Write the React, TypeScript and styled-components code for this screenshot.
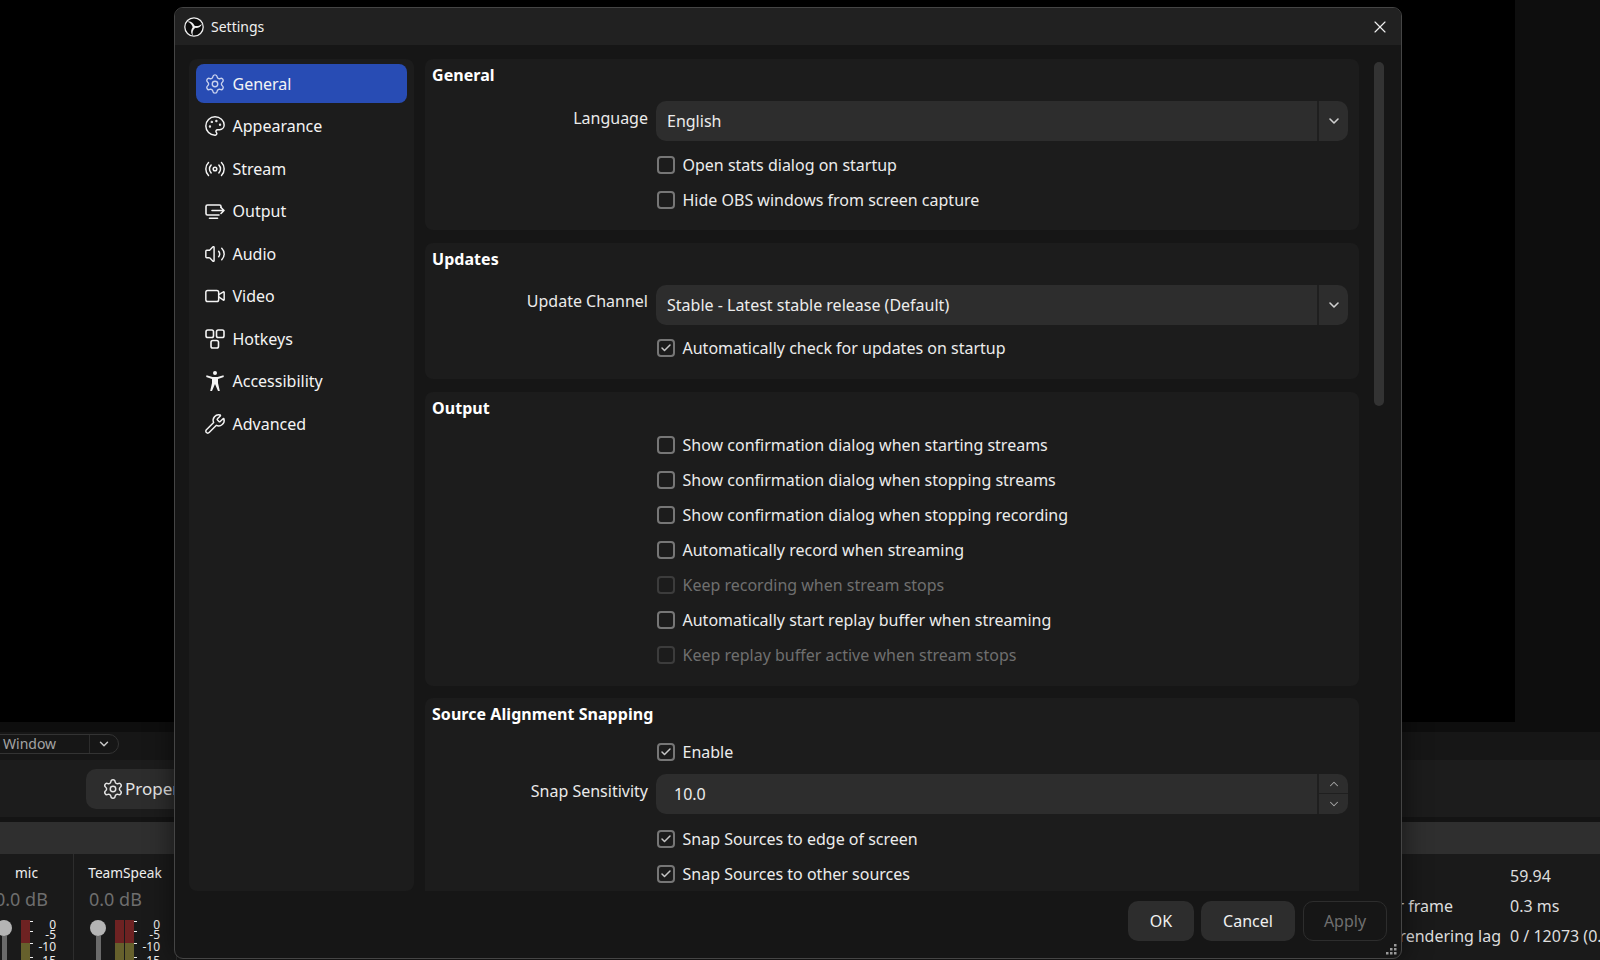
import React from 'react';
import styled, { createGlobalStyle } from 'styled-components';
import { Settings, Palette, Radio, Volume2, Video, Wrench, ChevronDown, ChevronUp, X, Check } from 'lucide-react';

const Global = createGlobalStyle`
  html, body { margin: 0; padding: 0; background: #000; }
  body { font-family: "Noto Sans", "Open Sans", sans-serif; color: #fff; }
  * { box-sizing: border-box; }
`;

const Page = styled.div`
  position: relative;
  width: 1600px;
  height: 960px;
  overflow: hidden;
  display: flex;
  flex-direction: column;
  background: #0e0e0e;
`;
const Preview = styled.div`
  height: 722px;
  width: 1515px;
  flex: none;
  margin-bottom: 10px;
  background: #000;
`;
const ContextBar = styled.div`
  height: 28px;
  flex: none;
  background: #161616;
  display: flex;
  align-items: flex-start;
  overflow: hidden;
`;
const SourceSelect = styled.div`
  margin: 2px 0 0 -60px;
  width: 179px;
  height: 20px;
  border: 1px solid #333;
  border-radius: 10px;
  display: flex;
  align-items: center;
  padding-left: 62px;
  font-size: 14px;
  line-height: 16px;
  color: #a4a4a4;
  flex: none;
`;
const SelectTail = styled.span`
  margin-left: auto;
  width: 29px;
  height: 100%;
  border-left: 1px solid #2c2c2c;
  display: flex;
  align-items: center;
  justify-content: center;
  color: #c8c8c8;
`;
const Toolbar = styled.div`
  height: 57px;
  flex: none;
  padding-left: 86px;
  background: #1c1c1c;
  display: flex;
  align-items: center;
`;
const ToolButton = styled.div`
  height: 40px;
  width: 150px;
  background: #2d2d2d;
  border-radius: 10px;
  display: flex;
  align-items: center;
  gap: 1px;
  padding-left: 16px;
  font-size: 17px;
  color: #e4e4e4;
`;
const DockGap = styled.div`
  height: 5px;
  flex: none;
  background: #141414;
`;
const DockHeader = styled.div`
  height: 32px;
  flex: none;
  background: #2f2f2f;
`;
const Dock = styled.div`
  flex: 1;
  min-height: 0;
  display: flex;
  justify-content: space-between;
  background: #1a1a1a;
  overflow: hidden;
`;
const Mixer = styled.div`
  display: flex;
  margin-left: -20px;
`;
const Channel = styled.div<{ $w: number }>`
  width: ${p => p.$w}px;
  flex: none;
  border-right: 1px solid #2d2d2d;
  padding: 9px 0 0 16px;
  display: flex;
  flex-direction: column;
  align-items: flex-start;
`;
const ChannelName = styled.div`
  flex: none;
  align-self: center;
  margin-left: -16px;
  height: 24px;
  line-height: 20px;
  font-size: 13.7px;
  color: #f0f0f0;
`;
const ChannelDb = styled.div`
  flex: none;
  height: 24px;
  line-height: 24px;
  margin-left: -1px;
  font-size: 18px;
  color: #6e6e6e;
  white-space: nowrap;
`;
const MeterRow = styled.div`
  flex: none;
  margin-top: 9px;
  display: flex;
  height: 60px;
`;
const Fader = styled.div`
  width: 16px;
  display: flex;
  flex-direction: column;
  align-items: center;
  margin-right: 9px;
`;
const Knob = styled.div`
  width: 16px;
  height: 16px;
  border-radius: 50%;
  background: #b4b4b4;
  flex: none;
`;
const Rail = styled.div`
  width: 5px;
  height: 44px;
  background: #6a6a6a;
`;
const Bars = styled.div`
  display: flex;
  gap: 1px;
`;
const Bar = styled.div`
  width: 9px;
  height: 60px;
  background: linear-gradient(#6e2222 0 23px, #66602c 23px);
`;
const Scale = styled.div`
  width: 26px;
  display: flex;
  flex-direction: column;
`;
const ScaleRow = styled.div<{ $h: number }>`
  height: ${p => p.$h}px;
  flex: none;
  display: flex;
  justify-content: space-between;
  font-size: 12px;
  line-height: 9px;
  color: #eee;
`;
const Tick = styled.i`
  width: 3px;
  height: 1px;
  margin-top: 1px;
  background: #eee;
`;
const Stats = styled.div`
  display: grid;
  grid-template-columns: 280px auto;
  grid-auto-rows: 30px;
  align-content: start;
  padding-top: 7px;
  margin-right: -28px;
  font-size: 16px;
  line-height: 30px;
  white-space: nowrap;
  color: #dedede;
  width: 398px;
`;

const Dialog = styled.div`
  position: absolute;
  left: 174px;
  top: 7px;
  width: 1228px;
  height: 952px;
  border: 1px solid #454545;
  border-radius: 9px;
  background: #161616;
  box-shadow: 0 0 28px rgba(0, 0, 0, 0.55);
  overflow: hidden;
  display: flex;
  flex-direction: column;
`;
const TitleBar = styled.div`
  height: 37px;
  flex: none;
  background: #212121;
  display: flex;
  align-items: center;
  padding: 0 11px 0 9px;
  gap: 7px;
  font-size: 14px;
  color: #f0f0f0;
`;
const CloseBtn = styled.div`
  margin-left: auto;
  display: flex;
  color: #eee;
`;
const Body = styled.div`
  flex: 1;
  min-height: 0;
  display: flex;
  padding: 14px 17px 0 14px;
`;
const Sidebar = styled.nav`
  width: 225px;
  flex: none;
  height: 832px;
  background: #1c1c1c;
  border-radius: 8px;
  padding: 5px 7px;
  display: flex;
  flex-direction: column;
  gap: 3.5px;
`;
const NavItem = styled.div<{ $active?: boolean }>`
  height: 39px;
  flex: none;
  border-radius: 8px;
  background: ${p => (p.$active ? '#284cb4' : 'transparent')};
  display: flex;
  align-items: center;
  padding-left: 8px;
  gap: 6.5px;
  font-size: 16px;
  color: #f4f4f4;
  svg { flex: none; }
`;
const Scroller = styled.div`
  margin-left: 11px;
  width: 934px;
  height: 832px;
  flex: none;
  overflow: hidden;
  display: flex;
  flex-direction: column;
  gap: 12.8px;
`;
const Panel = styled.section`
  background: #1c1c1c;
  border-radius: 8px;
  padding: 4px 11px 13px 7px;
  flex: none;
`;
const PanelTitle = styled.h2`
  margin: 0 0 8px;
  font-size: 16px;
  line-height: 24px;
  font-weight: 700;
  color: #fff;
  letter-spacing: 0.05px;
`;
const FormRow = styled.div`
  display: grid;
  grid-template-columns: 216px 1fr;
  column-gap: 8px;
  align-items: center;
  min-height: 35px;
`;
const FieldRow = styled(FormRow)<{ $top: number; $bottom: number }>`
  margin: ${p => p.$top}px 0 ${p => p.$bottom}px;
`;
const FieldLabel = styled.div`
  text-align: right;
  font-size: 16px;
  color: #eaeaea;
  margin-top: -7px;
`;
const Field = styled.div<{ $pad: number }>`
  height: 40px;
  background: #2d2d2d;
  border-radius: 10px;
  display: flex;
  align-items: center;
  font-size: 16px;
  color: #ececec;
  padding-left: ${p => p.$pad}px;
  overflow: hidden;
`;
const FieldTail = styled.div`
  margin-left: auto;
  width: 31px;
  height: 100%;
  border-left: 2px solid #1f1f1f;
  display: flex;
  align-items: center;
  justify-content: center;
  color: #d0d0d0;
`;
const SpinTail = styled.div`
  margin-left: auto;
  width: 31px;
  height: 100%;
  border-left: 2px solid #1f1f1f;
  display: grid;
  grid-template-rows: 1fr 1fr;
  color: #a8a8a8;
`;
const SpinCell = styled.div<{ $split?: boolean }>`
  display: flex;
  align-items: center;
  justify-content: center;
  border-bottom: ${p => (p.$split ? '1px solid #1f1f1f' : 'none')};
`;
const CheckLine = styled.div<{ $off?: boolean }>`
  display: flex;
  align-items: center;
  gap: 7.5px;
  font-size: 16px;
  color: ${p => (p.$off ? '#6f6f6f' : '#ececec')};
  padding-left: 1px;
`;
const Box = styled.span<{ $off?: boolean }>`
  width: 18px;
  height: 18px;
  flex: none;
  border: 2px solid ${p => (p.$off ? '#3c3c3c' : '#767676')};
  border-radius: 4px;
  display: flex;
  align-items: center;
  justify-content: center;
  color: #c6c6c6;
`;
const Scrollbar = styled.div`
  margin-left: 15px;
  margin-top: 3px;
  width: 10px;
  height: 344px;
  flex: none;
  border-radius: 5px;
  background: #333;
`;
const Footer = styled.div`
  height: 67px;
  flex: none;
  display: flex;
  justify-content: flex-end;
  gap: 7px;
  padding: 10px 14px 0 0;
  position: relative;
`;
const FootButton = styled.div<{ $w: number; $off?: boolean }>`
  width: ${p => p.$w}px;
  height: 40px;
  margin-left: ${p => (p.$off ? '1px' : '0')};
  border-radius: 10px;
  display: flex;
  align-items: center;
  justify-content: center;
  font-size: 16px;
  background: ${p => (p.$off ? 'transparent' : '#2d2d2d')};
  border: ${p => (p.$off ? '1px solid #2d2d2d' : 'none')};
  color: ${p => (p.$off ? '#6f6f6f' : '#f0f0f0')};
`;
const Grip = styled.svg`
  position: absolute;
  right: 4px;
  bottom: 3px;
`;

const ObsLogo = () => (
  <svg width="20" height="20" viewBox="0 0 20 20" fill="none">
    <circle cx="10" cy="10" r="9.2" fill="#0c0c0c" stroke="#f0f0f0" strokeWidth="1.3" />
    {[0, 120, 240].map(r => (
      <path
        key={r}
        transform={`rotate(${r} 10 10)`}
        d="M10.800 10.200C10.200 6.800 7.200 3.600 3.200 4.800C6.400 5.600 8.400 7.800 8.800 10.800Z"
        fill="#f0f0f0"
      />
    ))}
  </svg>
);
const OutputIcon = () => (
  <svg width="22" height="22" viewBox="0 0 22 22" fill="none" stroke="currentColor" strokeWidth="1.6" strokeLinecap="round" strokeLinejoin="round">
    <path d="M17 7.500V6.500a1.500 1.500 0 0 0-1.500-1.500H3.500A1.500 1.500 0 0 0 2 6.500v7A1.500 1.500 0 0 0 3.500 15H15" />
    <path d="M8 10.500h12M17 7.500l3 3-3 3" />
    <path d="M5.500 18.300h8" />
  </svg>
);
const HotkeysIcon = () => (
  <svg width="22" height="22" viewBox="0 0 22 22" fill="none" stroke="currentColor" strokeWidth="1.6">
    <rect x="2" y="2" width="7.500" height="7.500" rx="1.800" />
    <rect x="12.500" y="2" width="7.500" height="7.500" rx="1.800" />
    <rect x="7" y="12.500" width="7.500" height="7.500" rx="1.800" />
  </svg>
);
const AccessIcon = () => (
  <svg width="22" height="22" viewBox="0 0 22 22" fill="currentColor">
    <circle cx="11" cy="3" r="2" />
    <path d="M2.500 5.200 8.500 7H13.500L19.500 5.200 19.800 7 14 9V13L15.800 21H14L11 14 8 21H6.200L8 13V9L2.200 7Z" />
  </svg>
);

const nav = [
  { label: 'General', icon: <Settings size={22} strokeWidth={1.5} color="#c9d2ee" /> },
  { label: 'Appearance', icon: <Palette size={22} strokeWidth={1.6} /> },
  { label: 'Stream', icon: <Radio size={22} strokeWidth={1.6} /> },
  { label: 'Output', icon: <OutputIcon /> },
  { label: 'Audio', icon: <Volume2 size={22} strokeWidth={1.6} /> },
  { label: 'Video', icon: <Video size={22} strokeWidth={1.6} /> },
  { label: 'Hotkeys', icon: <HotkeysIcon /> },
  { label: 'Accessibility', icon: <AccessIcon /> },
  { label: 'Advanced', icon: <Wrench size={22} strokeWidth={1.6} /> },
];

const scale = [
  { t: '0', h: 10 },
  { t: '-5', h: 12 },
  { t: '-10', h: 14 },
  { t: '-15', h: 14 },
];

const CheckRow = ({ text, on, off }: { text: string; on?: boolean; off?: boolean }) => (
  <FormRow>
    <div />
    <CheckLine $off={off}>
      <Box $off={off}>{on && <Check size={12} strokeWidth={3} />}</Box>
      {text}
    </CheckLine>
  </FormRow>
);
const SelectRow = ({ label, value }: { label: string; value: string }) => (
  <FieldRow $top={14} $bottom={6}>
    <FieldLabel>{label}</FieldLabel>
    <Field $pad={11}>
      {value}
      <FieldTail><ChevronDown size={16} strokeWidth={2.4} /></FieldTail>
    </Field>
  </FieldRow>
);

const Meter = ({ name, bars, w }: { name: string; bars: number; w: number }) => (
  <Channel $w={w}>
    <ChannelName>{name}</ChannelName>
    <ChannelDb>0.0 dB</ChannelDb>
    <MeterRow>
      <Fader><Knob /><Rail /></Fader>
      <Bars>{Array.from({ length: bars }).map((_, i) => <Bar key={i} />)}</Bars>
      <Scale>
        {scale.map(s => (
          <ScaleRow key={s.t} $h={s.h}><Tick /><span>{s.t}</span></ScaleRow>
        ))}
      </Scale>
    </MeterRow>
  </Channel>
);

export default function App() {
  return (
    <Page>
      <Global />
      <Preview />
      <ContextBar>
        <SourceSelect>
          Window
          <SelectTail><ChevronDown size={14} strokeWidth={2.5} /></SelectTail>
        </SourceSelect>
      </ContextBar>
      <Toolbar>
        <ToolButton><Settings size={22} strokeWidth={1.6} />Properties</ToolButton>
      </Toolbar>
      <DockGap />
      <DockHeader />
      <Dock>
        <Mixer>
          <Meter name="mic" bars={1} w={94} />
          <Meter name="TeamSpeak" bars={2} w={103} />
        </Mixer>
        <Stats>
          <span>FPS</span><span>59.94</span>
          <span>Average time to render frame</span><span>0.3 ms</span>
          <span>Frames missed due to rendering lag</span><span>0 / 12073 (0.0%)</span>
        </Stats>
      </Dock>

      <Dialog>
        <TitleBar>
          <ObsLogo />
          Settings
          <CloseBtn><X size={20} strokeWidth={1.4} /></CloseBtn>
        </TitleBar>
        <Body>
          <Sidebar>
            {nav.map((n, i) => (
              <NavItem key={n.label} $active={i === 0}>{n.icon}{n.label}</NavItem>
            ))}
          </Sidebar>
          <Scroller>
            <Panel>
              <PanelTitle>General</PanelTitle>
              <SelectRow label="Language" value="English" />
              <CheckRow text="Open stats dialog on startup" />
              <CheckRow text="Hide OBS windows from screen capture" />
            </Panel>
            <Panel>
              <PanelTitle>Updates</PanelTitle>
              <SelectRow label="Update Channel" value="Stable - Latest stable release (Default)" />
              <CheckRow text="Automatically check for updates on startup" on />
            </Panel>
            <Panel>
              <PanelTitle>Output</PanelTitle>
              <CheckRow text="Show confirmation dialog when starting streams" />
              <CheckRow text="Show confirmation dialog when stopping streams" />
              <CheckRow text="Show confirmation dialog when stopping recording" />
              <CheckRow text="Automatically record when streaming" />
              <CheckRow text="Keep recording when stream stops" off />
              <CheckRow text="Automatically start replay buffer when streaming" />
              <CheckRow text="Keep replay buffer active when stream stops" off />
            </Panel>
            <Panel>
              <PanelTitle>Source Alignment Snapping</PanelTitle>
              <CheckRow text="Enable" on />
              <FieldRow $top={5} $bottom={7}>
                <FieldLabel>Snap Sensitivity</FieldLabel>
                <Field $pad={18}>
                  10.0
                  <SpinTail>
                    <SpinCell $split><ChevronUp size={14} strokeWidth={1.8} /></SpinCell>
                    <SpinCell><ChevronDown size={14} strokeWidth={1.8} /></SpinCell>
                  </SpinTail>
                </Field>
              </FieldRow>
              <CheckRow text="Snap Sources to edge of screen" on />
              <CheckRow text="Snap Sources to other sources" on />
            </Panel>
          </Scroller>
          <Scrollbar />
        </Body>
        <Footer>
          <FootButton $w={66}>OK</FootButton>
          <FootButton $w={94}>Cancel</FootButton>
          <FootButton $w={84} $off>Apply</FootButton>
          <Grip width="11" height="11" viewBox="0 0 11 11" fill="#9a9a9a">
            <rect x="8" y="0" width="2.500" height="2.500" />
            <rect x="4" y="4" width="2.500" height="2.500" />
            <rect x="8" y="4" width="2.500" height="2.500" />
            <rect x="0" y="8" width="2.500" height="2.500" />
            <rect x="4" y="8" width="2.500" height="2.500" />
            <rect x="8" y="8" width="2.500" height="2.500" />
          </Grip>
        </Footer>
      </Dialog>
    </Page>
  );
}
